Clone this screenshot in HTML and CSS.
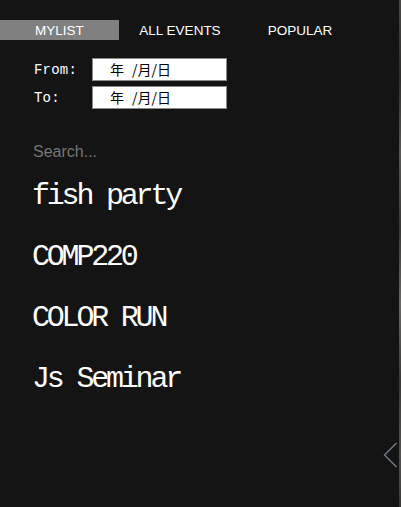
FILE: index.html
```html
<!DOCTYPE html>
<html>
<head>
<meta charset="utf-8">
<link rel="stylesheet" href="styles.css">
</head>
<body>
<div class="panel">
  <nav class="tabs">
    <div class="tab active">MYLIST</div>
    <div class="tab">ALL EVENTS</div>
    <div class="tab">POPULAR</div>
  </nav>
  <div class="dates">
    <div class="date-row"><span class="label">From:</span><div class="date-input"><span class="yr">年</span>/月/日</div></div>
    <div class="date-row"><span class="label">To:</span><div class="date-input"><span class="yr">年</span>/月/日</div></div>
  </div>
  <input class="search" type="text" placeholder="Search...">
  <ul class="events">
    <li>fish party</li>
    <li>COMP220</li>
    <li>COLOR RUN</li>
    <li>Js Seminar</li>
  </ul>
</div>
<div class="strip"></div>
<svg class="chevron" width="16" height="28" viewBox="0 0 16 28"><path d="M13.5 2 L1.5 14 L13.5 26" fill="none" stroke="#76808c" stroke-width="1.3"/></svg>
</body>
</html>
```
FILE: styles.css
```css
html, body {
  margin: 0;
  padding: 0;
  height: 100%;
}
body {
  background: #141414;
  display: flex;
  overflow: hidden;
  position: relative;
}
.panel {
  width: 399px;
  height: 507px;
  background: #141414;
}
.strip {
  width: 2px;
  height: 507px;
  background: linear-gradient(180deg, #4a4744 0%, #2f2d2b 15%, #5a5855 30%, #3a3836 45%, #6b6966 60%, #3b3937 75%, #55524f 90%, #3a3836 100%);
}
.tabs {
  display: flex;
  margin-top: 20px;
  height: 20px;
}
.tab {
  width: 120px;
  text-align: center;
  font-family: "Liberation Sans", Arial, sans-serif;
  font-size: 13.5px;
  line-height: 21px;
  color: #fff;
}
.tab.active {
  background: #808080;
  width: 119px;
  margin-right: 1px;
}
.dates {
  margin-top: 18px;
  padding-left: 34px;
  display: flex;
  flex-direction: column;
  gap: 5px;
}
.date-row {
  display: flex;
  align-items: center;
  height: 23px;
}
.label {
  width: 58px;
  font-family: "Liberation Mono", monospace;
  font-size: 14px;
  letter-spacing: 0.2px;
  line-height: 23px;
  padding-top: 1px;
  color: #fff;
}
.date-input {
  box-sizing: border-box;
  width: 135px;
  height: 23px;
  background: #fff;
  border: 1px solid #8a8a8a;
  padding-left: 17px;
  font-family: "Noto Sans CJK SC", sans-serif;
  font-size: 14px;
  line-height: 21px;
  white-space: pre;
  color: #000;
}
.yr {
  margin-right: 8px;
}
.search {
  display: block;
  margin: 33px 0 0 33px;
  padding: 0;
  border: none;
  outline: none;
  background: transparent;
  font-family: "Liberation Sans", Arial, sans-serif;
  font-size: 16px;
  height: 20px;
  color: #fff;
}
.search::placeholder {
  color: #757575;
}
.events {
  list-style: none;
  margin: 4px 0 0 32px;
  padding: 0;
}
.events li {
  font-family: "Liberation Mono", monospace;
  font-size: 30px;
  letter-spacing: -3.2px;
  line-height: 61px;
  height: 61px;
  color: #fff;
}
.chevron {
  position: absolute;
  left: 383px;
  top: 441px;
}
```
